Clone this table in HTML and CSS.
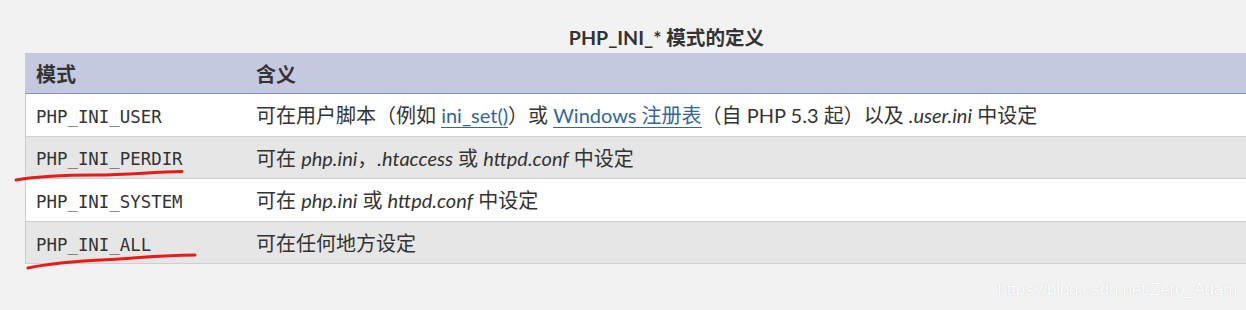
FILE: index.html
```html
<!DOCTYPE html>
<html lang="zh-CN">
<head>
<meta charset="utf-8">
<title>PHP_INI_* 模式的定义</title>
<link rel="stylesheet" href="styles.css">
</head>
<body>
<div class="page">
  <table class="doctable">
    <caption><strong>PHP_INI_* 模式的定义</strong></caption>
    <thead>
      <tr><th class="c1">模式</th><th>含义</th></tr>
    </thead>
    <tbody>
      <tr>
        <td class="c1"><code>PHP_INI_USER</code></td>
        <td>可在用户脚本（例如 <a class="lnk" href="#">ini_set()</a>）或 <a class="lnk" href="#">Windows 注册表</a>（自 PHP 5.3 起）以及 <em>.user.ini</em> 中设定</td>
      </tr>
      <tr class="odd">
        <td class="c1"><code>PHP_INI_PERDIR</code></td>
        <td>可在 <em>php.ini</em>，<em>.htaccess</em> 或 <em>httpd.conf</em> 中设定</td>
      </tr>
      <tr>
        <td class="c1"><code>PHP_INI_SYSTEM</code></td>
        <td>可在 <em>php.ini</em> 或 <em>httpd.conf</em> 中设定</td>
      </tr>
      <tr class="odd">
        <td class="c1"><code>PHP_INI_ALL</code></td>
        <td>可在任何地方设定</td>
      </tr>
    </tbody>
  </table>
  <svg class="marks" width="1246" height="310" viewBox="0 0 1246 310">
    <path d="M16 180 C 40 176, 60 175, 95 175 S 150 172, 182 171.5" />
    <path d="M28 268 C 50 263, 80 261, 110 259.5 S 160 255, 195 255" />
  </svg>
  <div class="watermark">https://blog.csdn.net/Zero_Adam</div>
</div>
</body>
</html>
```

FILE: styles.css
```css
html, body {
  margin: 0;
  padding: 0;
  background: #f2f2f2;
  overflow: hidden;
}
.page {
  position: relative;
  width: 1246px;
  height: 310px;
  padding: 24px 0 0 25px;
  box-sizing: border-box;
  font-family: Lato, "Noto Sans CJK SC", sans-serif;
  font-size: 20px;
  color: #333;
}
.doctable {
  width: 1283px;
  border-collapse: collapse;
  border-left: 1px solid #cccccc;
  border-bottom: 1px solid #cccccc;
}
.doctable caption {
  height: 29px;
  line-height: 27px;
  font-size: 19.6px;
  text-align: center;
  color: #333;
}
.doctable caption strong {
  font-weight: 700;
}
.doctable th {
  background: #c4c9df;
  height: 40px;
  padding: 0 10px;
  text-align: left;
  font-weight: 700;
  border-bottom: 1px solid #8890bf;
  vertical-align: middle;
  color: #333;
}
.doctable td {
  height: 41.6px;
  padding: 0 10px;
  background: #ffffff;
  border-bottom: 1px solid #cfcfcf;
  vertical-align: middle;
  white-space: nowrap;
}
.doctable tr.odd td {
  background: #e6e6e6;
}
.doctable .c1 {
  width: 200px;
}
code {
  font-family: "DejaVu Sans Mono", monospace;
  font-size: 17.4px;
  color: #333;
}
em {
  font-style: italic;
}
.lnk {
  color: #336699;
  text-decoration: none;
  border-bottom: 1px solid #336699;
}
.marks {
  position: absolute;
  left: 0;
  top: 0;
  pointer-events: none;
}
.marks path {
  fill: none;
  stroke: #ea1a1a;
  stroke-width: 3;
  stroke-linecap: round;
}
.watermark {
  position: absolute;
  right: 9px;
  bottom: 10px;
  font-family: "Liberation Sans", Arial, sans-serif;
  font-size: 17px;
  color: #ffffff;
  text-shadow: 0 0 1px #c0c0c0;
  letter-spacing: -0.2px;
}
```
